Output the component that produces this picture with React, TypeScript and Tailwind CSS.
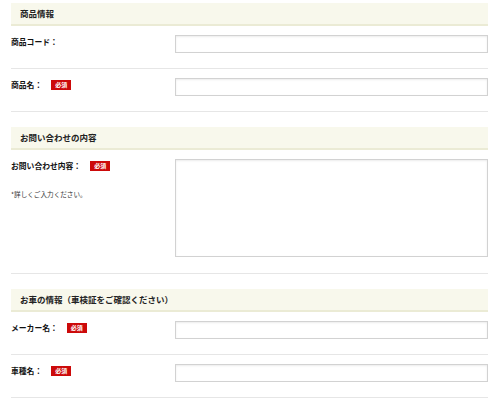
const font = { fontFamily: '"Noto Sans CJK JP", "Noto Sans", sans-serif' };

function Badge() {
  return (
    <span className="ml-[9px] inline-flex h-[10px] w-[20px] items-center justify-center bg-[#cc0a0a] text-[6px] leading-none text-white">
      必須
    </span>
  );
}

function SectionHead({ title }: { title: string }) {
  return (
    <div className="flex h-[23px] items-center border-b-2 border-[#ebebd5] bg-[#f8f8ec] pl-[9px] text-[8.5px] font-bold text-[#222]">
      {title}
    </div>
  );
}

function Row({
  label,
  required,
  note,
  tall,
}: {
  label: string;
  required?: boolean;
  note?: string;
  tall?: boolean;
}) {
  return (
    <div className={`flex border-b border-[#e6e6e6] pt-[9px] ${tall ? "pb-[16px]" : "pb-[15px]"}`}>
      <div className="w-[164px] shrink-0 pt-[2px]">
        <div className="flex items-center text-[7.8px] font-bold leading-[10px] text-[#111]">
          {label}
          {required && <Badge />}
        </div>
        {note && <p className="mt-[19px] text-[6.6px] leading-[9px] text-[#333]">{note}</p>}
      </div>
      {tall ? (
        <textarea className="h-[98px] flex-1 resize-none border border-[#d2d2d2] bg-white shadow-[inset_0_1px_2px_rgba(0,0,0,0.08)] outline-none" />
      ) : (
        <input className="h-[18px] flex-1 border border-[#d2d2d2] bg-white shadow-[inset_0_1px_2px_rgba(0,0,0,0.08)] outline-none" />
      )}
    </div>
  );
}

export default function App() {
  return (
    <div className="min-h-[404px] w-[500px] bg-white" style={font}>
      <div className="ml-[11px] w-[477px] pt-[3px]">
        <SectionHead title="商品情報" />
        <Row label="商品コード：" />
        <Row label="商品名：" required />

        <div className="mt-[15px]">
          <SectionHead title="お問い合わせの内容" />
        </div>
        <Row label="お問い合わせ内容：" required note="*詳しくご入力ください。" tall />

        <div className="mt-[15px]">
          <SectionHead title="お車の情報（車検証をご確認ください）" />
        </div>
        <Row label="メーカー名：" required />
        <Row label="車種名：" required />
      </div>
    </div>
  );
}
